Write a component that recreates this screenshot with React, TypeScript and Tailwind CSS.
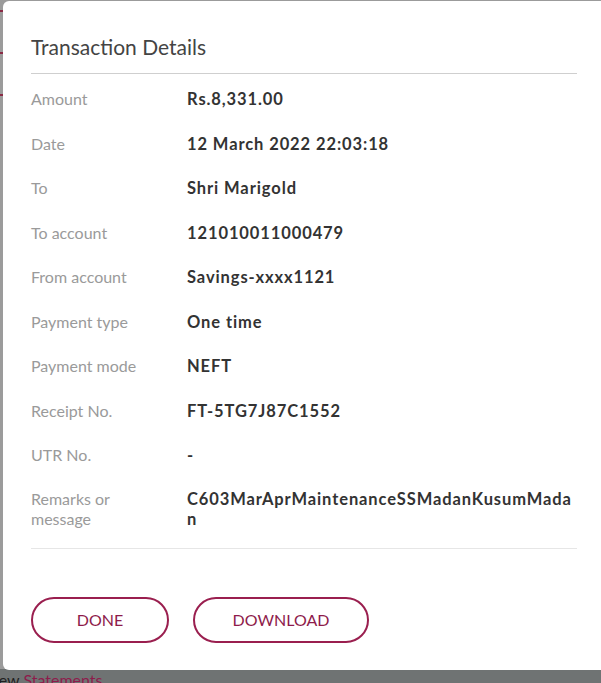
import React from "react";

const rows: [string, string][] = [
  ["Amount", "Rs.8,331.00"],
  ["Date", "12 March 2022 22:03:18"],
  ["To", "Shri Marigold"],
  ["To account", "121010011000479"],
  ["From account", "Savings-xxxx1121"],
  ["Payment type", "One time"],
  ["Payment mode", "NEFT"],
  ["Receipt No.", "FT-5TG7J87C1552"],
  ["UTR No.", "-"],
];

export default function App() {
  return (
    <div
      className="relative w-[601px] h-[683px] overflow-hidden bg-[#9b9b9b]"
      style={{ fontFamily: "Lato, 'Open Sans', sans-serif" }}
    >
      {/* background page */}
      <div className="flex flex-col h-full">
        <div className="flex flex-col gap-[40px] pt-[10px] w-[3px]">
          <div className="h-[2px] bg-[#8a2a45]" />
          <div className="h-[2px] bg-[#8a2a45]" />
          <div className="h-[2px] bg-[#8a2a45]" />
        </div>
        <div className="mt-auto h-[14px] bg-[#6f7373] leading-[14px] text-[16px] whitespace-nowrap overflow-hidden">
          <span className="relative top-[4px] text-[#1f1f1f] -ml-[16px]">View </span>
          <span className="relative top-[4px] text-[#8e1b4b]">Statements</span>
        </div>
      </div>

      {/* modal */}
      <div className="absolute left-[3px] top-[1px] w-[640px] h-[669px] bg-white rounded-[6px] pl-[28px] pt-[29px]">
        <div className="w-[546px]">
          <div className="text-[21px] leading-[34px] text-[#444444] pb-[9px] border-b border-[#cfcfcf]">
            Transaction Details
          </div>
          <div className="pt-[3px]">
            {rows.map(([k, v]) => (
              <div key={k} className="flex py-[11px] leading-[22.5px]">
                <div className="w-[156px] shrink-0 text-[#9a9a9a] text-[16px]">{k}</div>
                <div className="font-bold text-[#333333] text-[16.5px] tracking-[0.9px]">{v}</div>
              </div>
            ))}
            <div className="flex pt-[11px] pb-[19px] leading-[20px]">
              <div className="w-[156px] shrink-0 text-[#9a9a9a] text-[16px]">
                Remarks or
                <br />
                message
              </div>
              <div className="w-[394px] font-bold text-[#333333] text-[16.5px] tracking-[0.9px] break-all">
                C603MarAprMaintenanceSSMadanKusumMadan
              </div>
            </div>
          </div>
          <div className="border-b border-[#e6e6e6]" />
          <div className="flex gap-[24px] mt-[48px]">
            <button className="w-[138px] h-[46px] rounded-full border-2 border-[#9a1f4f] text-[#8e1b4b] text-[16px]">
              DONE
            </button>
            <button className="w-[176px] h-[46px] rounded-full border-2 border-[#9a1f4f] text-[#8e1b4b] text-[16px]">
              DOWNLOAD
            </button>
          </div>
        </div>
      </div>
    </div>
  );
}
